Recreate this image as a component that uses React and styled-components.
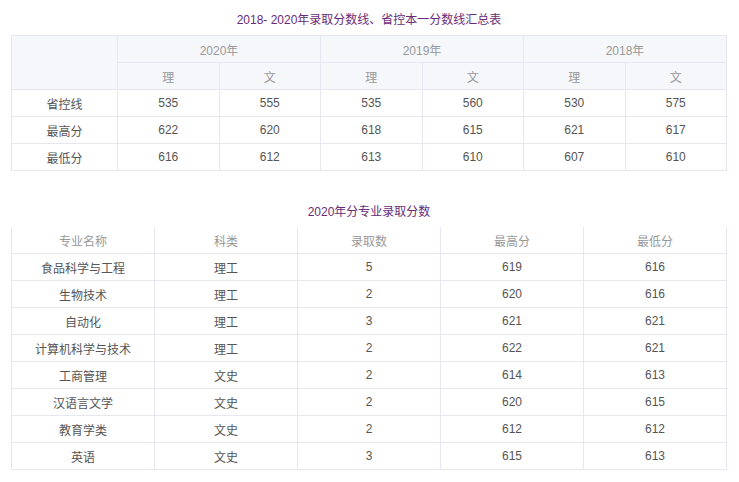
import React from "react";
import styled, { createGlobalStyle } from "styled-components";

const Global = createGlobalStyle`
  body { margin: 0; background: #fff; font-family: "Microsoft YaHei", "Liberation Sans", "Noto Sans CJK SC", sans-serif; }
`;

const Page = styled.div`
  width: 739px;
  padding: 11px 12px 0 11px;
  box-sizing: border-box;
`;

const Title = styled.div`
  text-align: center;
  font-size: 12px;
  color: #6a2c78;
  height: 24px;
  line-height: 18px;
`;

const Table = styled.table`
  width: 716px;
  border-collapse: collapse;
  table-layout: fixed;
  font-size: 12px;
  color: #555;
  margin-bottom: ${p => p.$mb || 0}px;
  td, th {
    border: 1px solid #e6e7f0;
    height: 26px;
    padding: 0;
    text-align: center;
    font-weight: normal;
  }
  th { color: #999; background: ${p => (p.$shaded ? "#f6f7fb" : "#fff")}; }
  ${p => !p.$shaded && `tr:first-child th { border-top: none; }`}
`;

const scores = [
  ["省控线", 535, 555, 535, 560, 530, 575],
  ["最高分", 622, 620, 618, 615, 621, 617],
  ["最低分", 616, 612, 613, 610, 607, 610],
];

const majors = [
  ["食品科学与工程", "理工", 5, 619, 616],
  ["生物技术", "理工", 2, 620, 616],
  ["自动化", "理工", 3, 621, 621],
  ["计算机科学与技术", "理工", 2, 622, 621],
  ["工商管理", "文史", 2, 614, 613],
  ["汉语言文学", "文史", 2, 620, 615],
  ["教育学类", "文史", 2, 612, 612],
  ["英语", "文史", 3, 615, 613],
];

export default function App() {
  return (
    <Page>
      <Global />
      <Title>2018- 2020年录取分数线、省控本一分数线汇总表</Title>
      <Table $shaded $mb={32}>
        <colgroup>
          <col style={{ width: 106 }} />
          {[0, 1, 2, 3, 4, 5].map(i => <col key={i} />)}
        </colgroup>
        <thead>
          <tr>
            <th rowSpan={2} />
            <th colSpan={2}>2020年</th>
            <th colSpan={2}>2019年</th>
            <th colSpan={2}>2018年</th>
          </tr>
          <tr>
            {["理", "文", "理", "文", "理", "文"].map((t, i) => <th key={i}>{t}</th>)}
          </tr>
        </thead>
        <tbody>
          {scores.map(r => (
            <tr key={r[0]}>{r.map((c, i) => <td key={i}>{c}</td>)}</tr>
          ))}
        </tbody>
      </Table>
      <Title>2020年分专业录取分数</Title>
      <Table>
        <thead>
          <tr>
            {["专业名称", "科类", "录取数", "最高分", "最低分"].map(t => <th key={t}>{t}</th>)}
          </tr>
        </thead>
        <tbody>
          {majors.map(r => (
            <tr key={r[0]}>{r.map((c, i) => <td key={i}>{c}</td>)}</tr>
          ))}
        </tbody>
      </Table>
    </Page>
  );
}
